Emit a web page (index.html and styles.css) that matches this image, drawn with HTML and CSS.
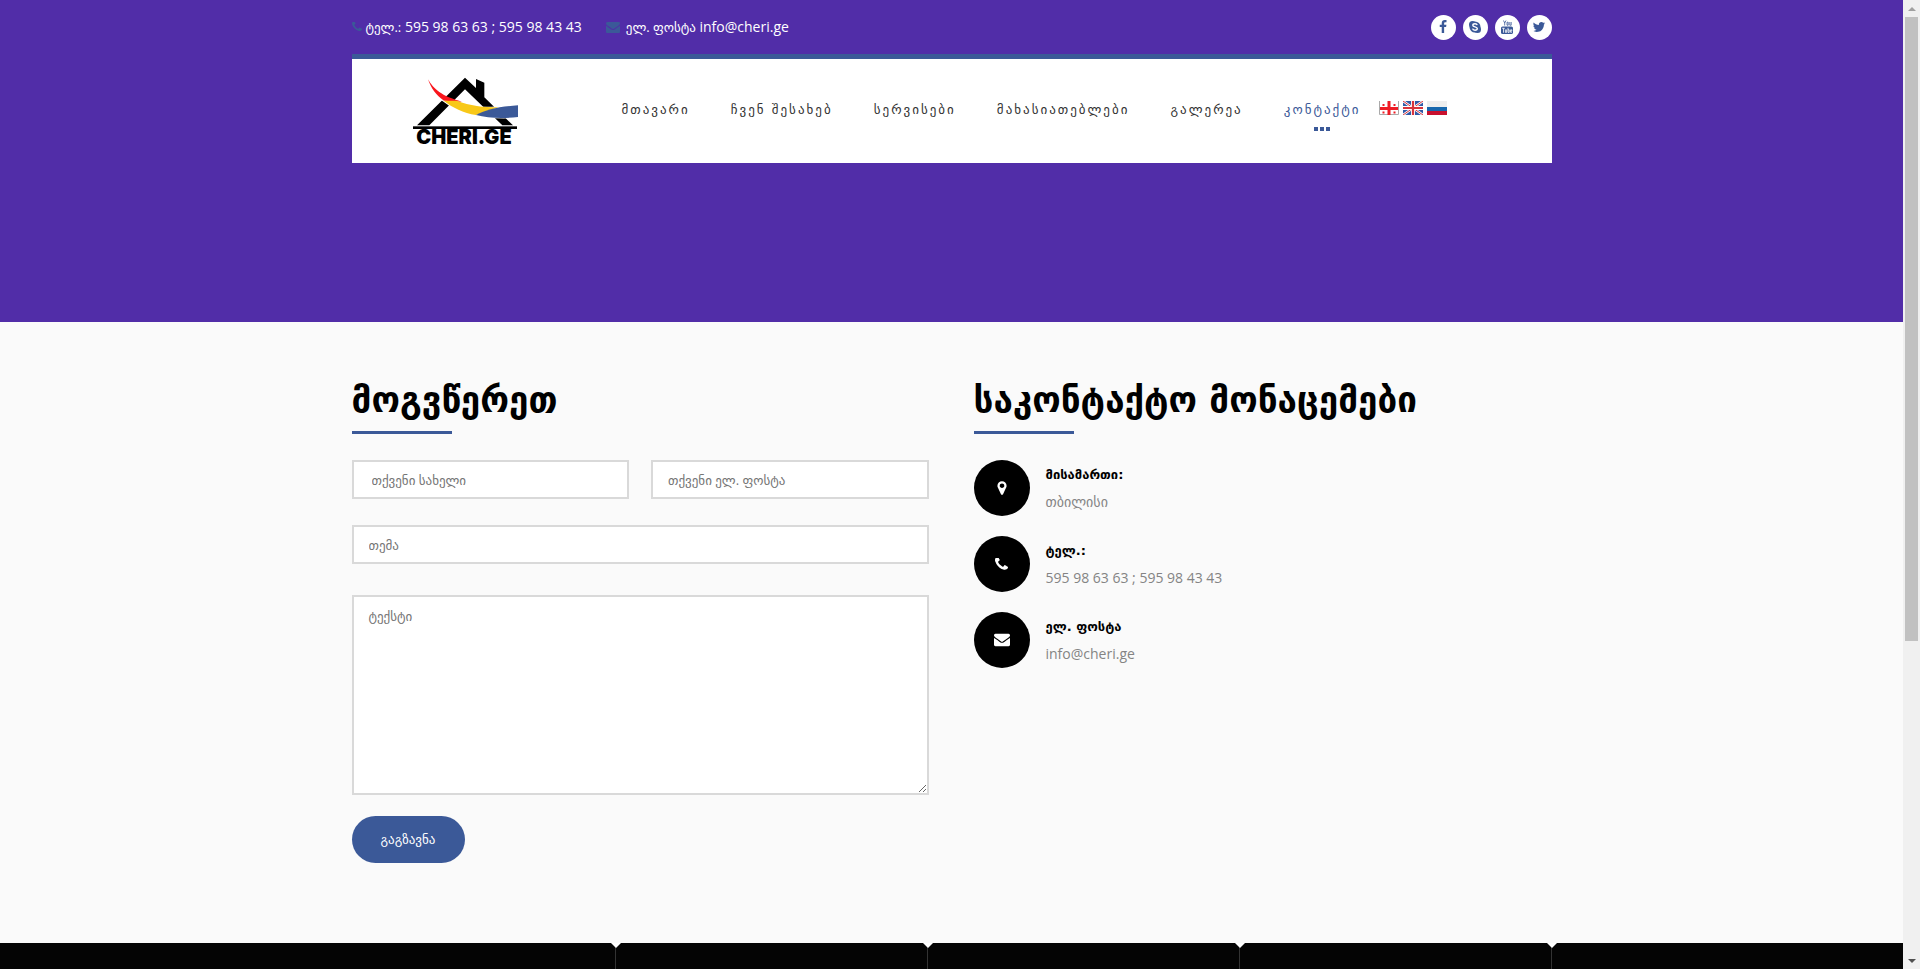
FILE: index.html
```html
<!DOCTYPE html>
<html lang="ka">
<head>
<meta charset="utf-8">
<title>Cheri.ge</title>
<link rel="stylesheet" href="styles.css">
</head>
<body>
<svg class="sprite" aria-hidden="true">
  <symbol id="phone" viewBox="192 256 1408 1408"><path d="M1600 1240q0 27-10 70.5t-21 68.5q-21 50-122 106-94 51-186 51-27 0-53-3.5t-57.5-12.5-47-14.5-55.5-20.5-49-18q-98-35-175-83-127-79-264-216t-216-264q-48-77-83-175-3-9-18-49t-20.5-55.5-14.5-47-12.5-57.5-3.5-53q0-92 51-186 56-101 106-122 25-11 68.5-21t70.5-10q14 0 21 3 18 6 53 76 11 19 30 54t35 63.5 31 53.5q3 4 17.5 25t21.5 35.5 7 28.5q0 20-28.5 50t-62 55-62 53-28.5 46q0 9 5 22.5t8.5 20.5 14 24 11.5 19q76 137 174 235t235 174q2 1 19 11.5t24 14 20.5 8.5 22.5 5q18 0 46-28.5t53-62 55-62 50-28.5q14 0 28.5 7t35.5 21.5 25 17.5q25 15 53.5 31t63.5 35 54 30q70 35 76 53 3 7 3 21z"/></symbol>
  <symbol id="mail" viewBox="0 128 1792 1664"><path d="M1792 710v794q0 66-47 113t-113 47h-1472q-66 0-113-47t-47-113v-794q44 49 101 87 362 246 497 345 57 42 92.5 65.5t94.5 48 110 24.5h2q51 0 110-24.5t94.5-48 92.5-65.5q170-123 498-345 57-39 100-87zm0-294q0 79-49 151t-122 123q-376 261-468 325-10 7-42.5 31t-54 38.5-52 32.5-57.5 27-50 9h-2q-23 0-50-9t-57.5-27-52-32.5-54-38.5-42.5-31q-91-64-262-182.5t-205-142.5q-62-42-117-115.5t-55-136.5q0-78 41.5-130t118.5-52h1472q65 0 112.5 47t47.5 113z"/></symbol>
  <symbol id="pin" viewBox="0 0 1792 1792"><path d="M1152 640q0-106-75-181t-181-75-181 75-75 181 75 181 181 75 181-75 75-181zm256 0q0 109-33 179l-364 774q-16 33-47.5 52t-67.5 19-67.5-19-46.5-52l-365-774q-33-70-33-179 0-212 150-362t362-150 362 150 150 362z"/></symbol>
</svg>
<div class="page">
  <header class="header">
    <div class="container">
      <div class="topbar">
        <ul class="topbar-contacts">
          <li><svg class="icon-phone"><use href="#phone"/></svg><span><span class="geo">ტელ.:</span> 595 98 63 63 ; 595 98 43 43</span></li>
          <li><svg class="icon-mail"><use href="#mail"/></svg><span><span class="geo">ელ. ფოსტა</span> info@cheri.ge</span></li>
        </ul>
        <ul class="social">
          <li><a href="#" aria-label="Facebook"><svg viewBox="0 0 1792 1792"><path d="M1343 12v264h-157q-86 0-116 36t-30 108v189h293l-39 296h-254v759h-306v-759h-255v-296h255v-218q0-186 104-288.5t277-102.5q147 0 228 12z"/></svg></a></li>
          <li><a href="#" aria-label="Skype"><svg viewBox="0 0 14 14"><circle cx="7" cy="7" r="5.5"/><circle cx="4.5" cy="4.5" r="3.5"/><circle cx="9.5" cy="9.5" r="3.5"/><path class="skype-s" d="M9.2 5.1C8.9 4 7.8 3.8 7 3.8c-1.200 0-2.200.5-2.200 1.500 0 2.200 4.500 1 4.500 3.300 0 1-1 1.600-2.300 1.600-1.300 0-2.200-.6-2.400-1.500"/></svg></a></li>
          <li><a href="#" aria-label="YouTube"><svg viewBox="0 0 14 14"><rect x="1" y="6.500" width="12" height="7.500" rx="1.600"/><path class="yt-top" d="M3.500.5l1.200 2.500v2.500M6 .5L4.700 3M7 2.200h1.200v3H7zM9.800 2v3.200h1.400V2"/><path class="yt-box" d="M2.200 8.300h2.600M3.500 8.300v4.400M5.400 9.500v2.900h1.200V9.500M8 7.800v4.600h1.200V9.800H8M11.900 12.300h-1.300V9.800h1.200v1.300h-1.200"/></svg></a></li>
          <li><a href="#" aria-label="Twitter"><svg viewBox="0 0 1792 1792"><path d="M1684 408q-67 98-162 167 1 14 1 42 0 130-38 259.5t-115.5 248.5-184.5 210.5-258 146-323 54.5q-271 0-496-145 35 4 78 4 225 0 401-138-105-2-188-64.5t-114-159.5q33 5 61 5 43 0 85-11-112-23-185.5-111.5t-73.5-205.5v-4q68 38 146 41-66-44-105-115t-39-154q0-88 44-163 121 149 294.5 238.5t371.5 99.5q-8-38-8-74 0-134 94.5-228.5t228.500-94.500q140 0 236 102 109-21 205-78-37 115-142 178 93-10 186-50z"/></svg></a></li>
        </ul>
      </div>
      <div class="menubar">
        <a class="logo" href="#" aria-label="Cheri.ge">
          <svg viewBox="219 230 315 204">
            <path d="M231 375L375 232l33 31V236l25 11v44l86 84h-32L375 267 268 375z"/>
            <path class="logo-gap" d="M262 234C276 262 300 290 340 303C400 323 440 323 534 312V353C440 358 370 349 306 301C282 283 270 262 262 234z"/>
            <path class="logo-red" d="M264 237C280 265 305 288 366 304L312 301C288 285 273 263 264 237z"/>
            <path class="logo-yellow" d="M311 301L350 301C390 316 430 321 475 321L408 344C370 338 338 322 311 301z"/>
            <path class="logo-blue" d="M408 344C440 327 475 319 534 315V350C490 355 445 354 408 344z"/>
            <rect x="219" y="378" width="312" height="8"/>
            <text x="229" y="432">CHERI.GE</text>
          </svg>
        </a>
        <nav class="menu">
          <a href="#">მთავარი</a>
          <a href="#">ჩვენ შესახებ</a>
          <a href="#">სერვისები</a>
          <a href="#">მახასიათებლები</a>
          <a href="#">გალერეა</a>
          <a class="active" href="#">კონტაქტი</a>
        </nav>
        <div class="langs">
          <a href="#" aria-label="ქართული"><svg viewBox="0 0 20 14"><path fill="#fff" d="M0 0h20v14H0z"/><path fill="none" stroke="#aaa" d="M.5 0v13.500h19V0"/><path fill="#ee1c25" d="M8.500 0h3v6H19v3h-7.500v5h-3V9H1V6h7.500zM3.500 3h2v2h-2zM14.500 3h2v2h-2zM3.500 10.500h2v2h-2zM14.500 10.500h2v2h-2z"/></svg></a>
          <a href="#" aria-label="English"><svg viewBox="0 0 20 14"><path fill="#2f5aa8" d="M0 0h20v14H0z"/><path stroke="#fff" stroke-width="2.400" d="M0 0l20 14M20 0L0 14"/><path stroke="#d8343c" d="M0 0l20 14M20 0L0 14"/><path stroke="#fff" stroke-width="4" d="M10 0v14M0 7h20"/><path stroke="#d8343c" stroke-width="2.200" d="M10 0v14M0 7h20"/></svg></a>
          <a href="#" aria-label="Русский"><svg viewBox="0 0 20 14"><path fill="#eee" d="M0 0h20v6H0z"/><path fill="#1767ad" d="M0 6h20v4H0z"/><path fill="#c8102e" d="M0 10h20v4H0z"/></svg></a>
        </div>
      </div>
    </div>
  </header>
  <main class="container contact">
    <section>
      <h2>მოგვწერეთ</h2>
      <form class="form">
        <div class="form-row">
          <input class="wide-pad" type="text" aria-label="თქვენი სახელი" placeholder="თქვენი სახელი">
          <input type="email" aria-label="თქვენი ელ. ფოსტა" placeholder="თქვენი ელ. ფოსტა">
        </div>
        <input type="text" aria-label="თემა" placeholder="თემა">
        <textarea aria-label="ტექსტი" placeholder="ტექსტი"></textarea>
        <button type="button">გაგზავნა</button>
      </form>
    </section>
    <section>
      <h2>საკონტაქტო მონაცემები</h2>
      <ul class="details">
        <li><span class="disc"><svg><use href="#pin"/></svg></span><div><h3>მისამართი:</h3><p>თბილისი</p></div></li>
        <li><span class="disc"><svg class="small"><use href="#phone"/></svg></span><div><h3>ტელ.:</h3><p>595 98 63 63 ; 595 98 43 43</p></div></li>
        <li><span class="disc"><svg><use href="#mail"/></svg></span><div><h3>ელ. ფოსტა</h3><p>info@cheri.ge</p></div></li>
      </ul>
    </section>
  </main>
  <footer class="footer"><div class="footer-grid"><div></div><div></div><div></div><div></div></div></footer>
</div>
<div class="scrollbar" aria-hidden="true"><i class="up"></i><div class="track"><div class="thumb"></div></div><i class="down"></i></div>
</body>
</html>
```
FILE: styles.css
```css
* { box-sizing: border-box; }
body {
  margin: 0;
  height: 100vh;
  display: flex;
  overflow: hidden;
  background: #fafafa;
  font: 14px/24px "Open Sans", "DejaVu Sans", sans-serif;
  color: #848484;
}
ul, h2, h3, p { margin: 0; padding: 0; list-style: none; }
a { color: inherit; text-decoration: none; }
svg { display: block; fill: currentColor; }
.sprite { position: absolute; width: 0; height: 0; }
.geo { font-size: 13px; }
.page { flex: 1; min-width: 0; display: flex; flex-direction: column; }
.container { width: 100%; max-width: 1200px; margin: 0 auto; }

.header { background: #512da8; padding-bottom: 159px; }
.topbar { height: 54px; display: flex; justify-content: space-between; align-items: center; color: #fff; }
.topbar-contacts { display: flex; gap: 24px; }
.topbar-contacts li { display: flex; align-items: center; gap: 4px; }
.topbar-contacts svg { color: #3b5998; }
.icon-phone { width: 10px; height: 10px; }
.icon-mail { width: 14px; height: 13px; margin-right: 2px; }
.social { display: flex; gap: 7px; }
.social a {
  width: 25px; height: 25px; border-radius: 50%;
  display: flex; align-items: center; justify-content: center;
  background: #fff; color: #3b5998;
}
.social svg { width: 14px; height: 14px; }
.skype-s { fill: none; stroke: #fff; stroke-width: 1.4; }
.yt-top { fill: none; stroke: #3b5998; stroke-width: .8; }
.yt-box { fill: none; stroke: #fff; stroke-width: .8; }

.menubar { height: 109px; border-top: 5px solid #3b5998; background: #fff; display: flex; align-items: flex-start; padding: 0 105px 0 61px; }
.logo { color: #000; padding-top: 18px; }
.logo svg { width: 105px; height: 68px; overflow: visible; }
.logo text { font: 900 60px Inter, sans-serif; }
.logo-gap { fill: #fff; }
.logo-red { fill: #f9151c; }
.logo-yellow { fill: #f8c818; }
.logo-blue { fill: #3b5998; }
.menu { flex: 1; display: flex; justify-content: space-between; padding: 39px 18px 0 104px; font: 13px/24px "DejaVu Sans", sans-serif; letter-spacing: 2px; color: #333; }
.menu a { white-space: nowrap; }
.menu .active { color: #3b5998; }
.active::after {
  content: ""; display: block; width: 16px; height: 4px; margin: 5px auto 0;
  background: repeating-linear-gradient(90deg, #3b5998 0 4px, transparent 4px 6px);
}
.langs { display: flex; gap: 4px; padding-top: 42px; }
.langs svg { width: 20px; height: 14px; }

.contact { flex: 1; display: grid; grid-template-columns: 577px 1fr; gap: 45px; padding-top: 54px; }
h2 { font: bold 35px/48px "DejaVu Sans", sans-serif; color: #000; white-space: nowrap; }
h2::after { content: ""; display: block; width: 100px; height: 3px; margin: 7px 0 26px; background: #3b5998; }
.form { display: flex; flex-direction: column; align-items: stretch; }
.form-row { display: grid; grid-template-columns: 1fr 1fr; gap: 22px; margin-bottom: 26px; }
input, textarea {
  width: 100%; min-width: 0; margin: 0; border: 2px solid #d9d9d9; border-radius: 0; background: #fff;
  font: 13px/20px "Open Sans", "DejaVu Sans", sans-serif; padding: 0 15px;
}
input { height: 39px; }
.wide-pad { padding-left: 18px; }
::placeholder { color: #757575; opacity: 1; }
textarea { height: 200px; margin: 31px 0 21px; padding-top: 9px; resize: vertical; }
button { align-self: flex-start; border: 0; border-radius: 24px; width: 113px; height: 47px; background: #3b5998; color: #fff; font: 13px "DejaVu Sans", sans-serif; }
.details { display: grid; gap: 20px; }
.details li { display: flex; gap: 16px; height: 56px; }
.disc { width: 56px; height: 56px; border-radius: 50%; background: #000; color: #fff; display: flex; align-items: center; justify-content: center; }
.disc svg { width: 16px; height: 16px; }
.disc .small { width: 13px; height: 13px; }
h3 { font: bold 13px/24px "DejaVu Sans", sans-serif; color: #000; padding: 3px 0; }

.footer { height: 26px; background: #040404; }
.footer-grid { display: grid; grid-template-columns: 265px repeat(3, 312px); max-width: 1202px; height: 100%; margin: 0 auto; }
.footer-grid div { border-right: 1px solid #333; position: relative; }
.footer-grid div::after {
  content: ""; position: absolute; top: 0; right: -6px;
  border: 5px solid transparent; border-top-color: #fff; border-bottom: 0;
}
.scrollbar { width: 17px; background: #f0f0f0; display: flex; flex-direction: column; align-items: center; }
.up, .down { height: 17px; display: flex; align-items: center; }
.up::after, .down::after { content: ""; border: 4px solid transparent; }
.up::after { border-top: 0; border-bottom-color: #a0a0a0; }
.down::after { border-bottom: 0; border-top-color: #505050; }
.track { flex: 1; width: 13px; }
.thumb { height: 66.7%; background: #c1c1c1; }
```
